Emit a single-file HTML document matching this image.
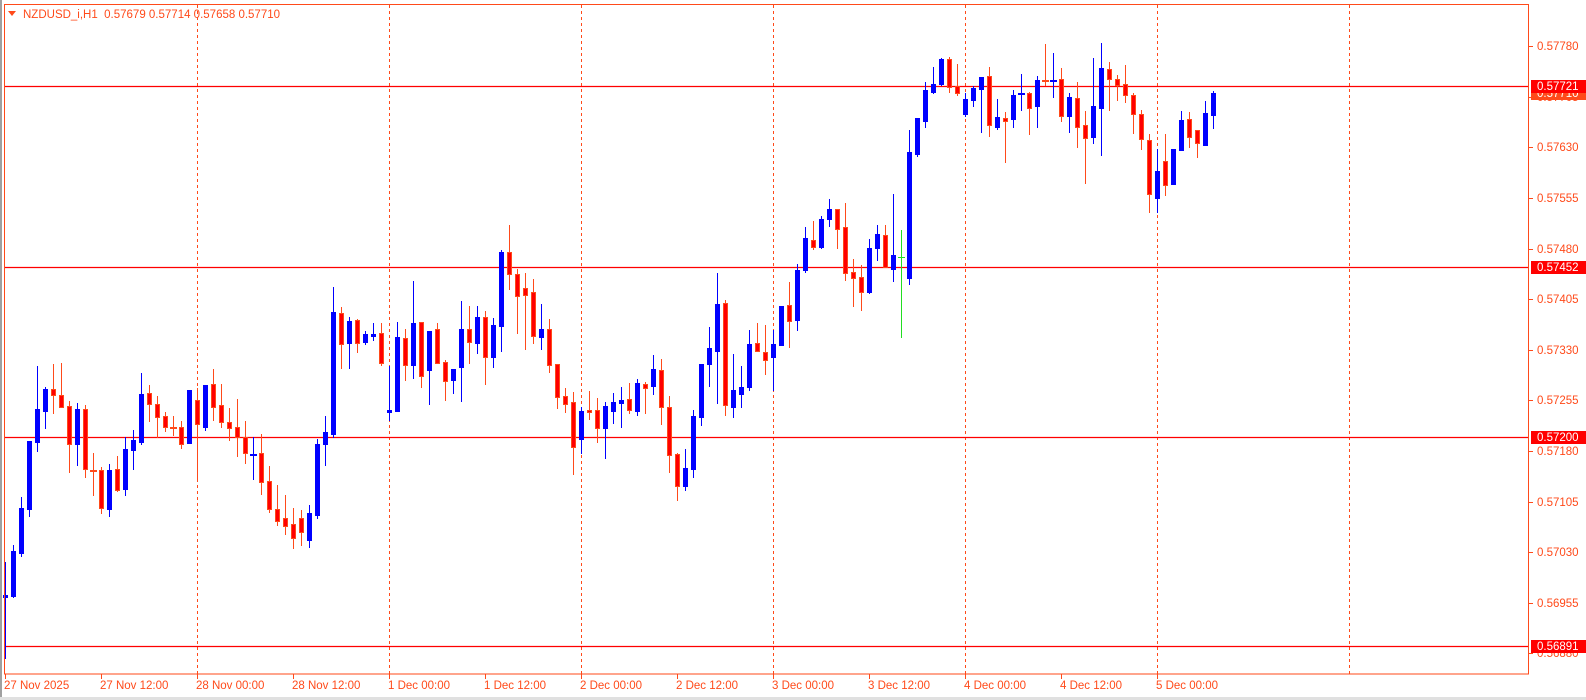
<!DOCTYPE html>
<html><head><meta charset="utf-8">
<style>
html,body{margin:0;padding:0;background:#fff;}
body{width:1586px;height:700px;position:relative;overflow:hidden;font-family:"Liberation Sans",sans-serif;}
svg{position:absolute;left:0;top:0;}
</style></head>
<body>
<svg id="c" width="1586" height="700" xmlns="http://www.w3.org/2000/svg" font-family="Liberation Sans, sans-serif" font-size="11.5">
<rect x="0" y="0" width="2" height="700" fill="#a0a0a0"/>
<rect x="0" y="697" width="1586" height="3" fill="#e0e0e0"/>
<g id="grid" stroke="#ff4a1a" stroke-width="1" stroke-dasharray="3,3">
<line x1="197.5" y1="5" x2="197.5" y2="674"/>
<line x1="389.5" y1="5" x2="389.5" y2="674"/>
<line x1="581.5" y1="5" x2="581.5" y2="674"/>
<line x1="773.5" y1="5" x2="773.5" y2="674"/>
<line x1="965.5" y1="5" x2="965.5" y2="674"/>
<line x1="1157.5" y1="5" x2="1157.5" y2="674"/>
<line x1="1349.5" y1="5" x2="1349.5" y2="674"/>
</g>
<g stroke="#ff0000" stroke-width="1.2">
<line x1="4" y1="86.5" x2="1529" y2="86.5"/>
<line x1="4" y1="267.5" x2="1529" y2="267.5"/>
<line x1="4" y1="437.5" x2="1529" y2="437.5"/>
<line x1="4" y1="646.5" x2="1529" y2="646.5"/>
</g>
<g id="candles"></g>
<rect x="4.5" y="4.5" width="1524" height="669.5" fill="none" stroke="#ff4a1a" stroke-width="1"/>
<polygon points="8,11 16,11 12,16" fill="#ff4a1a"/>
<text x="23" y="18" fill="#ff4a1a">NZDUSD_i,H1&#160;&#160;0.57679 0.57714 0.57658 0.57710</text>
<g id="axis" fill="#ff4a1a"></g>
</svg>
<script>
var D=[
['b',562,595,597,658],
['b',545,551,596,597],['b',497,508,553,556],['b',441,441,509,516],['b',366,409,442,451],['b',387,389,411,428],
['r',364,389,395,413],['r',363,395,407,407],['r',401,406,444,472],['b',403,409,444,465],['r',405,409,469,477],
['r',453,470,471,495],['r',467,470,508,513],['b',464,470,509,516],['r',456,469,490,491],['b',437,449,489,495],
['b',430,440,450,469],['b',373,394,442,444],['r',385,393,404,421],['r',396,404,417,437],['r',412,416,427,431],
['r',416,427,428,435],['r',421,427,444,448],['b',390,390,443,443],['r',388,400,424,481],['b',385,385,427,430],
['r',369,384,407,420],['r',384,405,422,427],['r',408,422,428,440],['r',399,427,437,456],['r',421,437,453,463],
['b',437,454,455,479],['r',434,453,482,494],['r',466,481,509,512],['r',485,509,521,525],['r',495,518,526,534],
['r',508,524,538,548],['r',510,518,532,545],['b',505,513,540,547],
['b',439,444,515,518],['b',416,432,444,465],['b',287,312,434,437],['r',307,313,344,368],['b',317,321,343,368],
['r',319,320,343,352],['b',331,334,342,344],['b',323,334,336,340],['r',323,333,363,365],
['b',366,410,412,420],['b',322,337,411,411],['r',329,338,365,380],['b',281,323,365,378],['r',322,322,376,387],
['b',331,331,370,404],['r',323,329,363,363],['r',360,362,381,400],['b',369,369,380,393],['b',301,329,367,401],
['r',306,329,342,363],['b',306,317,343,353],['r',311,317,357,384],['b',318,325,357,367],['b',250,252,326,351],
['r',225,252,274,289],['r',269,274,296,333],['r',273,288,295,349],['r',279,292,336,343],['b',304,329,337,349],
['r',319,329,365,372],['r',364,364,397,408],['r',388,396,404,412],['r',392,402,447,474],['b',407,411,439,453],
['r',391,410,412,419],['r',398,410,428,442],
['b',402,406,428,458],['b',393,402,411,423],['b',387,400,403,427],['r',383,399,410,413],['b',379,383,411,415],
['r',382,384,388,413],['b',355,369,386,394],['r',359,370,407,424],['r',396,407,455,472],['r',453,454,486,500],
['b',449,468,486,490],['b',410,416,469,477],['b',364,364,417,425],['b',327,348,364,386],['b',273,304,351,403],
['r',300,303,405,415],['b',354,390,407,417],['b',366,387,394,407],['b',330,344,387,390],['r',323,343,351,351],
['r',325,352,360,374],['b',330,344,357,390],['b',306,306,345,345],['r',282,305,321,347],['b',264,270,320,330],
['b',227,238,270,272],['r',221,240,247,249],['b',216,219,247,248],['b',199,209,219,226],['r',209,209,229,248],
['r',203,227,273,280],['r',259,272,278,306],['r',265,277,292,310],['b',239,248,292,293],['b',225,234,248,260],
['r',225,235,267,267],['b',194,255,269,281],
['g',230,257,257,337],['b',130,152,278,284],['b',118,118,154,156],['b',82,90,121,127],['b',67,84,92,93],
['b',58,59,84,85],['r',57,59,87,92],['r',64,86,93,95],['b',93,99,114,116],['b',86,88,100,106],
['b',77,77,89,132],['r',67,76,125,136],['b',99,117,127,129],['r',112,118,121,162],['b',90,95,119,127],
['b',74,93,94,110],['r',92,93,108,134],['b',76,80,106,127],['r',44,80,81,85],['b',53,80,81,97],
['r',68,79,116,121],['b',93,97,116,132],['r',82,98,127,147],['r',111,125,138,183],['b',58,106,137,143],
['b',43,68,108,155],['r',62,69,79,110],['r',75,79,85,100],['r',65,84,95,102],['r',93,95,114,133],
['r',110,114,139,149],['r',134,140,194,212],['b',149,171,198,212],['r',134,161,185,195],['b',149,149,184,184],
['b',111,120,150,150],['r',112,119,137,147],['r',130,130,143,157],['b',101,113,145,145],['b',91,93,115,128]
];
var NS="http://www.w3.org/2000/svg",g=document.getElementById('candles');
function R(x,y,w,h,f){var r=document.createElementNS(NS,'rect');r.setAttribute('x',x);r.setAttribute('y',y);r.setAttribute('width',w);r.setAttribute('height',Math.max(h,1));r.setAttribute('fill',f);g.appendChild(r);}
D.forEach(function(d,k){var c=d[0],H=d[1],T=d[2],B=d[3],L=d[4];var x=5+8*k;
 var col=c=='b'?'#0000ff':(c=='g'?'#22dd22':'#ff4a1a');
 R(x,H,1,L-H+1,col);
 if(c=='g'){R(x-3,T,7,1,col);return;}
 if(B-T<2){R(x-3,T,7,Math.max(B-T,1)+1,col);return;}
 if(c=='b'){R(x-2,T,5,B-T+1,col);}
 else{R(x-2,T,5,B-T+1,'#ff4a1a');R(x-1,T+1,3,B-T-1,'#ff0000');}
});
var a=document.getElementById('axis');
function T(x,y,s,f,anchor){var t=document.createElementNS(NS,'text');t.setAttribute('x',x);t.setAttribute('y',y);t.setAttribute('fill',f||'#ff4a1a');t.textContent=s;a.appendChild(t);}
function L(x,y,w,h,f){var r=document.createElementNS(NS,'rect');r.setAttribute('x',x);r.setAttribute('y',y);r.setAttribute('width',w);r.setAttribute('height',h);r.setAttribute('fill',f);a.appendChild(r);}
var prices=['0.57780','0.57705','0.57630','0.57555','0.57480','0.57405','0.57330','0.57255','0.57180','0.57105','0.57030','0.56955','0.56880'];
prices.forEach(function(p,i){var y=Math.round(46.2+i*50.6);L(1529,y,4,1,'#ff4a1a');T(1537,y+4,p);});
L(1531,87,55,13,'#ff4a1a');T(1537,97,'0.57710','#ffffff');
L(1531,80,55,13,'#ff0000');T(1537,90,'0.57721','#ffffff');
L(1531,261,55,13,'#ff0000');T(1537,271,'0.57452','#ffffff');
L(1531,431,55,13,'#ff0000');T(1537,441,'0.57200','#ffffff');
L(1531,640,55,13,'#ff0000');T(1537,650,'0.56891','#ffffff');
var dl=['27 Nov 2025','27 Nov 12:00','28 Nov 00:00','28 Nov 12:00','1 Dec 00:00','1 Dec 12:00','2 Dec 00:00','2 Dec 12:00','3 Dec 00:00','3 Dec 12:00','4 Dec 00:00','4 Dec 12:00','5 Dec 00:00'];
dl.forEach(function(s,i){var x=5+96*i;L(x,674,1,5,'#ff4a1a');T(x-1,689,s);});
</script>
</body></html>
